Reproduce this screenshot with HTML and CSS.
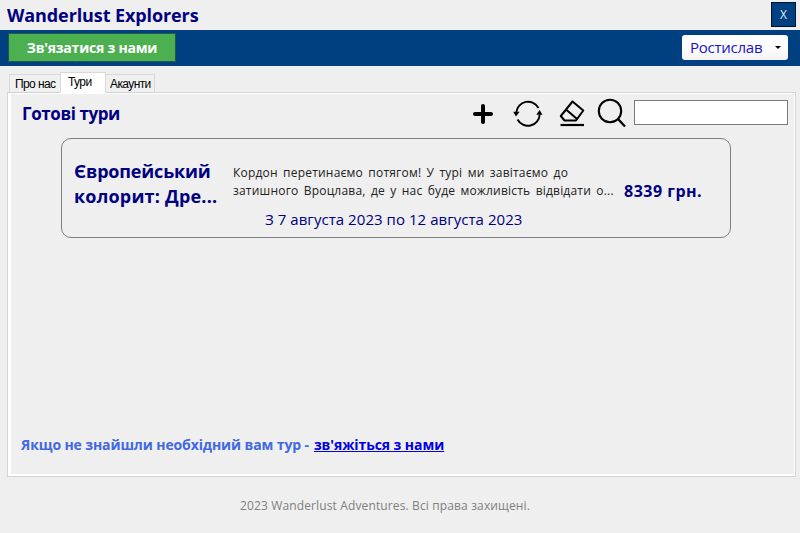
FILE: index.html
```html
<!DOCTYPE html>
<html lang="uk">
<head>
<meta charset="utf-8">
<title>Wanderlust Explorers</title>
<link rel="stylesheet" href="styles.css">
</head>
<body>
<header class="titlebar">
  <h1 class="brand"><span>Wanderlust Explorers</span></h1>
  <button class="close"><span>X</span></button>
</header>
<div class="toolbar">
  <button class="contact"><span>Зв'язатися з нами</span></button>
  <button class="user"><span class="user-name">Ростислав</span><i class="caret"></i></button>
</div>
<main class="content">
  <nav class="tabs">
    <a class="tab tab-about"><span>Про нас</span></a>
    <a class="tab tab-active"><span>Тури</span></a>
    <a class="tab tab-accounts"><span>Акаунти</span></a>
  </nav>
  <section class="page">
    <div class="page-head">
      <h2 class="page-title"><span>Готові тури</span></h2>
      <svg class="icon icon-plus" width="22" height="22" viewBox="0 0 22 22"><path d="M11 3v16M3 11h16" stroke-width="4"/></svg>
      <svg class="icon icon-refresh" width="32" height="28" viewBox="0 0 32 28"><path d="M4.3 12.500A11.800 11.800 0 0 1 26.500 8M27.700 14.500A11.800 11.800 0 0 1 5.500 19.500" stroke-width="1.900"/><path class="solid" d="M1.200 11.800h6.400L4 16.500zM24.300 14.700h6.200L27.600 10z"/></svg>
      <svg class="icon icon-eraser" width="28" height="30" viewBox="0 0 28 30"><path d="M14.500 3.500 25.300 12.500 18 22.500H6.500L2.800 18zM8 11.500 18.500 20.500" stroke-width="2"/><path d="M2.500 27h23.500" stroke-width="2.200"/></svg>
      <svg class="icon icon-search" width="30" height="32" viewBox="0 0 30 32"><circle cx="13" cy="13" r="11.200" stroke-width="2.100"/><path d="M21 21l7 7.500" stroke-width="2.300"/></svg>
      <input class="search" type="text">
    </div>
    <article class="card">
      <h3 class="card-title"><span class="l1">Європейський</span><br><span class="l2">колорит: Дре...</span></h3>
      <div class="card-body">
        <p class="desc"><span class="d1">Кордон перетинаємо потягом! У турі ми завітаємо до</span><br><span class="d2">затишного Вроцлава, де у нас буде можливість відвідати о...</span></p>
        <p class="dates"><span>З 7 августа 2023 по 12 августа 2023</span></p>
      </div>
      <strong class="price"><span>8339 грн.</span></strong>
    </article>
    <p class="hint"><span class="hint-text">Якщо не знайшли необхідний вам тур -</span><a class="link">зв'яжіться з нами</a></p>
  </section>
</main>
<footer class="footer"><span>2023 Wanderlust Adventures. Всі права захищені.</span></footer>
</body>
</html>
```

FILE: styles.css
```css
* { box-sizing: border-box; }
body {
  margin: 0;
  width: 800px;
  height: 533px;
  overflow: hidden;
  background: #efefef;
  font-family: "Open Sans", "Noto Sans", sans-serif;
  color: navy;
}
h1, h2, h3, p { margin: 0; white-space: nowrap; }
button { font-family: inherit; padding: 0; border-radius: 0; white-space: nowrap; }

.titlebar { display: flex; justify-content: space-between; height: 30px; padding: 2px 4px 0 7px; }
.brand { font-size: 18px; line-height: 27px; font-weight: 700; letter-spacing: -0.1px; }
.close { width: 25px; height: 25px; background: #004080; border: 1px solid #00142c; color: #dfe9f5; font-size: 12px; line-height: 23px; }

.toolbar { display: flex; justify-content: space-between; height: 36px; padding: 3px 12px 0 8px; background: #004080; }
.contact { width: 168px; height: 29px; background: #4caf50; border: 1px solid #1c5b4c; color: #fff; font-size: 14px; font-weight: 700; line-height: 27px; letter-spacing: -0.22px; }
.user { display: flex; align-items: center; width: 106px; height: 25px; margin-top: 2px; padding-left: 8px; border: 0; border-radius: 3px; background: linear-gradient(#fff 40%, #f3f3f3); color: #1a12c8; font-size: 15px; line-height: 25px; letter-spacing: -0.25px; }
.user-name { width: 85px; text-align: left; }
.caret { border: 3px solid transparent; border-top-color: #000; border-bottom: 0; }

.content { padding: 6px 3px 0 7px; }
.tabs { display: flex; align-items: flex-end; height: 21px; margin-bottom: -1px; padding-left: 2px; }
.tab { height: 19px; border: 1px solid #d9d9d9; border-bottom-color: #d0d0d0; background: #f0f0f0; color: #000; font-family: "Liberation Sans", sans-serif; font-size: 12px; line-height: 18px; padding-left: 5px; white-space: nowrap; letter-spacing: -0.6px; }
.tab-about { width: 51px; border-right: 0; }
.tab-active { width: 46px; height: 21px; padding-left: 7px; background: #fff; border-bottom-color: #fff; line-height: 18px; }
.tab-accounts { width: 49px; padding-left: 4px; border-left: 0; }

.page { display: flex; flex-direction: column; width: 789px; height: 385px; border: 1px solid #d5d5d5; box-shadow: inset 3px 0 #fff, inset 0 -2px #fff, inset -1px 0 #fff, inset 0 1px #fff; }
.page-head { display: flex; height: 45px; padding: 4px 7px 0 14px; }
.page-title { width: 450px; font-size: 17px; line-height: 34px; letter-spacing: -0.4px; }
.icon { flex: none; fill: none; stroke: #000; stroke-linejoin: round; }
.solid { fill: #000; stroke: none; }
.icon-plus { margin-top: 6px; stroke-linecap: round; }
.icon-refresh { margin: 3px 0 0 18px; }
.icon-eraser { margin: 1px 0 0 14px; }
.icon-search { margin: 1px 0 0 11px; }
.search { width: 154px; height: 25px; margin: 3px 0 0 auto; border: 1px solid #7a7a7a; background: #fff; border-radius: 0; padding: 0 4px; }

.card { display: flex; width: 670px; height: 100px; margin-left: 53px; border: 1px solid #808080; border-radius: 10px; }
.card-title { width: 159px; padding: 20px 0 0 12px; font-size: 18px; line-height: 25px; }
.l1 { letter-spacing: -0.18px; }
.l2 { letter-spacing: 0.2px; }
.card-body { width: 391px; padding: 25px 0 0 12px; }
.desc { color: #222; font-size: 12px; line-height: 18px; word-spacing: 2px; letter-spacing: 0.2px; }
.dates { margin-top: 8px; padding-left: 32px; font-size: 15px; line-height: 22px; letter-spacing: 0.05px; }
.price { padding-top: 41px; padding-left: 12px; font-size: 16px; line-height: 22px; white-space: nowrap; letter-spacing: 0.5px; }

.hint { margin-top: 197px; padding-left: 13px; font-size: 14px; line-height: 22px; font-weight: 700; color: #4169e1; margin-top: 196px; letter-spacing: -0.12px; }
.link { margin-left: 5px; color: #0000e0; text-decoration: underline; letter-spacing: -0.08px; }
.footer { margin-top: 18px; padding-left: 240px; color: gray; font-size: 12px; line-height: 22px; white-space: nowrap; letter-spacing: 0.13px; }
```
